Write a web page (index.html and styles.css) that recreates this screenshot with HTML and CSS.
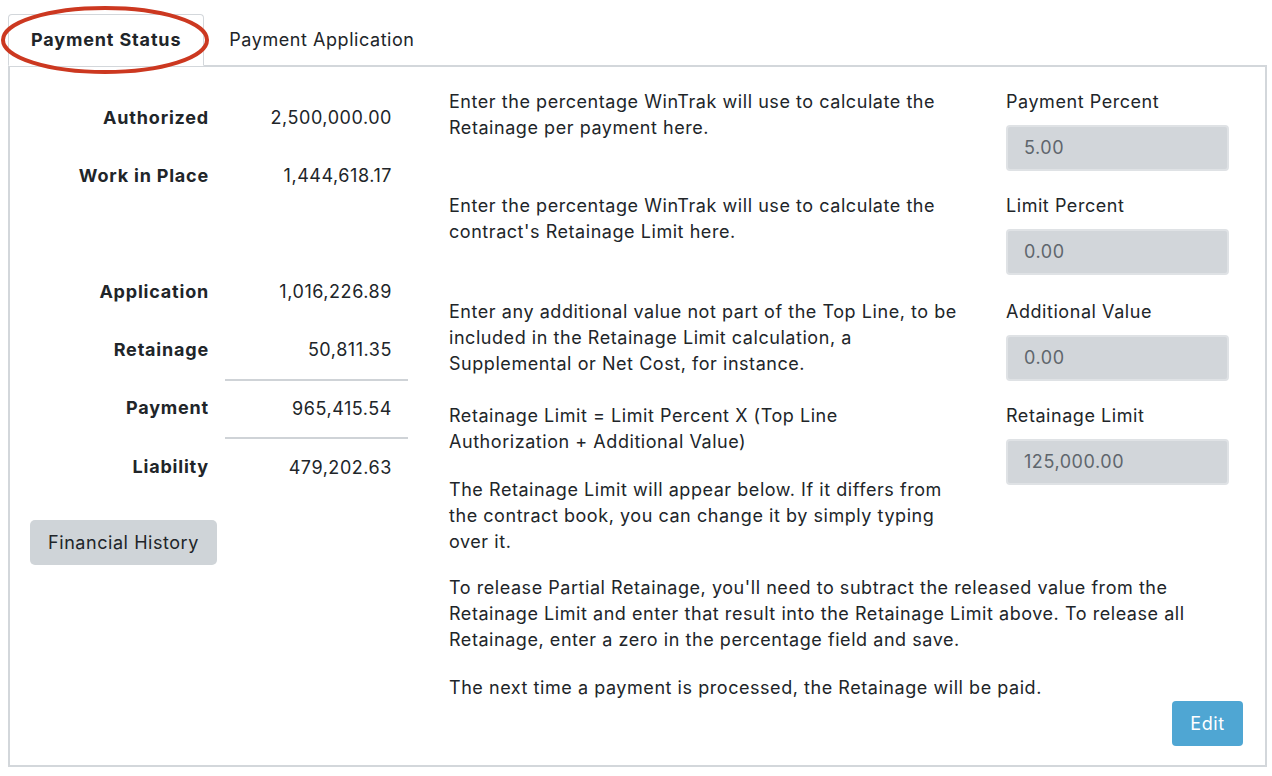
FILE: index.html
```html
<!DOCTYPE html>
<html>
<head>
<meta charset="utf-8">
<link rel="stylesheet" href="styles.css">
</head>
<body>
<div class="page">
  <div class="tabs">
    <div class="tab active">Payment Status</div>
    <div class="tab">Payment Application</div>
    <svg class="circle" width="220" height="80" viewBox="0 0 220 80"><ellipse cx="105" cy="40" rx="102" ry="32" fill="none" stroke="#cc3820" stroke-width="4"/></svg>
  </div>
  <div class="panel">
    <div class="left">
      <div class="stats">
        <div class="row"><div class="lbl">Authorized</div><div class="val">2,500,000.00</div></div>
        <div class="row"><div class="lbl">Work in Place</div><div class="val">1,444,618.17</div></div>
        <div class="row"><div class="lbl"></div><div class="val"></div></div>
        <div class="row"><div class="lbl">Application</div><div class="val">1,016,226.89</div></div>
        <div class="row"><div class="lbl">Retainage</div><div class="val">50,811.35</div></div>
        <div class="row"><div class="lbl">Payment</div><div class="val line">965,415.54</div></div>
        <div class="row tall"><div class="lbl">Liability</div><div class="val line">479,202.63</div></div>
      </div>
      <button class="btn-grey">Financial History</button>
    </div>
    <div class="main">
      <div class="frow">
        <div class="text"><p>Enter the percentage WinTrak will use to calculate the Retainage per payment here.</p></div>
        <div class="field"><label>Payment Percent</label><div class="input">5.00</div></div>
      </div>
      <div class="frow">
        <div class="text"><p>Enter the percentage WinTrak will use to calculate the contract's Retainage Limit here.</p></div>
        <div class="field"><label>Limit Percent</label><div class="input wide-gap">0.00</div></div>
      </div>
      <div class="frow">
        <div class="text"><p>Enter any additional value not part of the Top Line, to be included in the Retainage Limit calculation, a Supplemental or Net Cost, for instance.</p></div>
        <div class="field"><label>Additional Value</label><div class="input">0.00</div></div>
      </div>
      <div class="frow">
        <div class="text">
          <p>Retainage Limit = Limit Percent X (Top Line Authorization + Additional Value)</p>
          <p class="tight">The Retainage Limit will appear below. If it differs from the contract book, you can change it by simply typing over it.</p>
        </div>
        <div class="field"><label>Retainage Limit</label><div class="input">125,000.00</div></div>
      </div>
      <p>To release Partial Retainage, you'll need to subtract the released value from the Retainage Limit and enter that result into the Retainage Limit above. To release all Retainage, enter a zero in the percentage field and save.</p>
      <p class="last">The next time a payment is processed, the Retainage will be paid.</p>
      <div class="actions"><button class="btn-blue">Edit</button></div>
    </div>
  </div>
</div>
</body>
</html>
```
FILE: styles.css
```css
* { box-sizing: border-box; }
html, body { margin: 0; padding: 0; background: #fff; }
body {
  font-family: Inter, "Open Sans", "Liberation Sans", sans-serif;
  font-size: 18px;
  letter-spacing: 0.55px;
  line-height: 26px;
  color: #212529;
}
.page { padding: 14px 5px 0 8px; width: 1272px; }
.tabs { position: relative; display: flex; height: 51px; }
.tab {
  padding: 12px 22px 13px 22px;
  border: 1px solid transparent;
  border-radius: 4px 4px 0 0;
  height: 52px;
  white-space: nowrap;
}
.tab.active {
  font-weight: 700;
  letter-spacing: 0.85px;
  border-color: #d3d7db;
  border-bottom-color: #fff;
  background: #fff;
  position: relative;
  z-index: 1;
}
.tab + .tab { padding-left: 24px; }
.circle { position: absolute; left: -8px; top: -14px; z-index: 2; }
.panel {
  border: 2px solid #d3d7db;
  display: flex;
  padding: 22px 22px 20px 21px;
  height: 702px;
}
.left { width: 377px; flex: none; margin-right: 41px; }
.stats { display: flex; flex-direction: column; }
.row { display: flex; height: 58px; }
.row.tall { height: 60px; }
.lbl { width: 194px; padding-right: 16px; text-align: right; font-weight: 700; letter-spacing: 0.8px; line-height: 58px; }
.val { width: 183px; padding-right: 16px; text-align: right; line-height: 58px; }
.val.line { border-top: 2px solid #cfd3d7; line-height: 56px; }
.row.tall .lbl, .row.tall .val { line-height: 60px; }
.row.tall .val.line { line-height: 58px; }
.btn-grey {
  margin-top: 23px;
  font: inherit;
  letter-spacing: inherit;
  color: #212529;
  background: #cfd4d8;
  border: none;
  border-radius: 5px;
  height: 45px;
  width: 187px;
  margin-left: -1px;
  padding: 0;
}
.main { flex: 1; display: flex; flex-direction: column; }
p { margin: 0 0 22px 0; }
p.tight { margin-bottom: 20px; }
.frow { display: flex; }
.text { width: 512px; flex: none; margin-right: 45px; }
.field { width: 223px; flex: none; }
.field label { display: block; margin-bottom: 10px; }
.input {
  height: 46px;
  background: #d2d6da;
  border: 2px solid #dfe2e5;
  border-radius: 4px;
  color: #5f666d;
  padding: 8px 16px;
  line-height: 26px;
  margin-bottom: 22px;
}
.input.wide-gap { margin-bottom: 24px; }
.last { margin-bottom: 0; }
.actions { display: flex; justify-content: flex-end; }
.btn-blue {
  font: inherit;
  letter-spacing: inherit;
  color: #fff;
  background: #4fa6d3;
  border: none;
  border-radius: 4px;
  height: 45px;
  width: 71px;
}
```
